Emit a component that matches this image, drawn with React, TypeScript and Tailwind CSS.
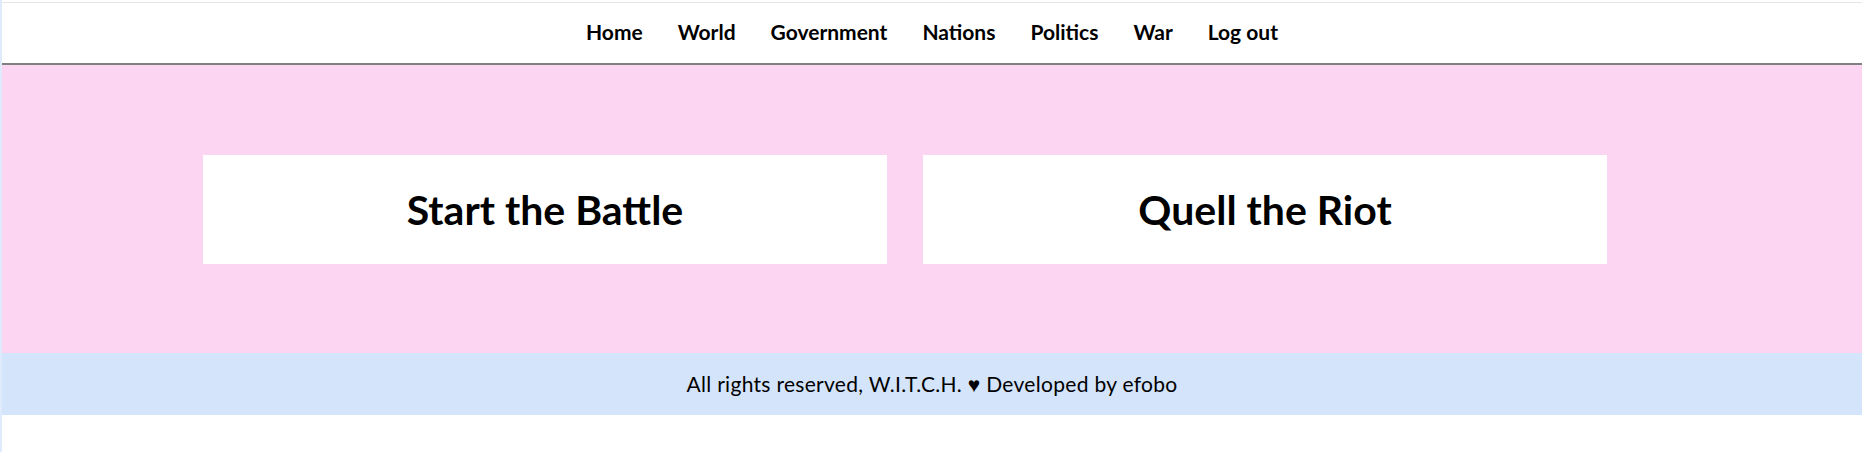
const navItems = ['Home', 'World', 'Government', 'Nations', 'Politics', 'War', 'Log out'];

const ActionCard = ({ title }: { title: string }) => (
  <button
    type="button"
    className="w-[684px] h-[109px] bg-white flex items-center justify-center text-[41px] font-bold text-black"
  >
    {title}
  </button>
);

export default function App() {
  return (
    <div className="min-h-[452px] bg-[#dfeafc] pl-[2px] font-['Lato','Liberation_Sans',sans-serif]">
      <div className="min-h-[452px] bg-white pt-[2px]">
        <nav className="h-[63px] border-t border-[#e6e6e6] border-b-2 border-b-[#808080] flex items-center justify-center gap-[35px] pb-[2px]">
          {navItems.map((item) => (
            <a key={item} href="#" className="text-[21px] font-bold text-black">
              {item}
            </a>
          ))}
        </nav>

        <main className="bg-[#fcd5f2] pt-[90px] pb-[89px] pl-[201px] flex gap-[36px]">
          <ActionCard title="Start the Battle" />
          <ActionCard title="Quell the Riot" />
        </main>

        <footer className="h-[62px] bg-[#d4e4fa] flex items-center justify-center text-[21px] tracking-[0.3px] text-black">
          All rights reserved, W.I.T.C.H. ♥ Developed by efobo
        </footer>
      </div>
    </div>
  );
}
